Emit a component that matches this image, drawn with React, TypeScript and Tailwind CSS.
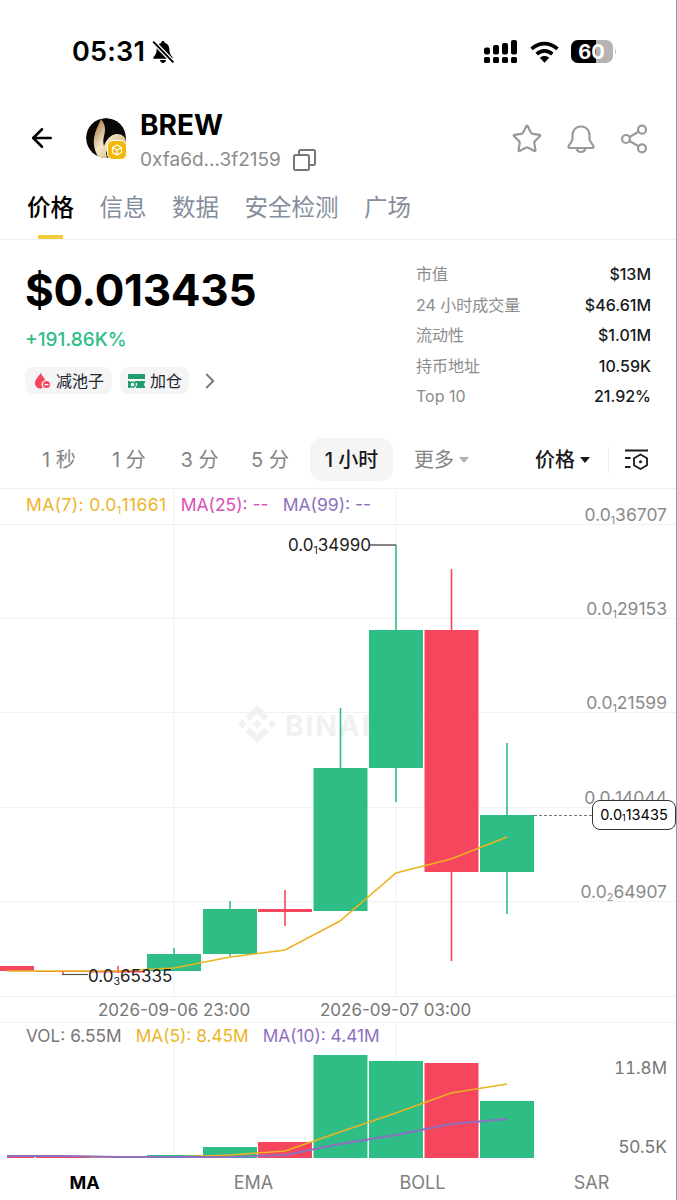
import { ArrowLeft, ChevronRight, Share2, Star } from "lucide-react";

const sans = "font-['Inter','Noto_Sans_CJK_SC',sans-serif]";

const GREEN = "#2ebd85";
const RED = "#f6465d";

const candles = [
  { x: 63, body: [971, 972], wick: [971, 974], up: false, w: 54 },
  { x: 118, body: [971, 972.5], wick: [966, 973], up: false, w: 54 },
  { x: 174, body: [954, 971], wick: [948, 971], up: true, w: 54 },
  { x: 230, body: [909, 954], wick: [901, 956], up: true, w: 54 },
  { x: 285, body: [909, 912], wick: [890, 926], up: false, w: 54 },
  { x: 340.5, body: [768, 911], wick: [708, 911], up: true, w: 54 },
  { x: 396, body: [630, 768], wick: [545, 802], up: true, w: 54 },
  { x: 451.5, body: [630, 872], wick: [569, 961], up: false, w: 54 },
  { x: 507, body: [815, 872], wick: [743, 914], up: true, w: 54 },
];

const volumes = [
  { x: 63, top: 1157, up: false },
  { x: 118, top: 1157.5, up: false },
  { x: 174, top: 1155, up: true },
  { x: 230, top: 1147, up: true },
  { x: 285, top: 1142, up: false },
  { x: 340.5, top: 1055, up: true },
  { x: 396, top: 1061, up: true },
  { x: 451.5, top: 1063, up: false },
  { x: 507, top: 1101, up: true },
];

const priceLabels = [
  { sub: "1", rest: "36707", top: "top-[14px]" },
  { sub: "1", rest: "29153", top: "top-[108px]" },
  { sub: "1", rest: "21599", top: "top-[202px]" },
  { sub: "1", rest: "14044", top: "top-[297px]" },
  { sub: "2", rest: "64907", top: "top-[391px]" },
];

const stats = [
  ["市值", "$13M"],
  ["24 小时成交量", "$46.61M"],
  ["流动性", "$1.01M"],
  ["持币地址", "10.59K"],
  ["Top 10", "21.92%"],
];

function Sub({ sub, rest }: { sub: string; rest: string }) {
  return (
    <>
      0.0
      <span className="text-[0.62em] relative top-[0.3em]">{sub}</span>
      {rest}
    </>
  );
}

function StatusBar() {
  return (
    <div className="h-[101px] flex items-start justify-between pt-[37px] pl-[72px] pr-[60px]">
      <div className="flex items-center gap-[6px]">
        <span className="text-[27px] leading-[30px] font-semibold text-black tracking-[0.2px]">05:31</span>
        <svg width="24" height="24" viewBox="0 0 22 22">
          <path d="M11 1c-.9 0-1.5.6-1.6 1.5C6.800 3.200 5.200 5.500 5.200 8.300c0 3.800-1 5.600-3 7.500v1.500h17.600v-1.500c-2-1.900-3-3.700-3-7.500 0-2.800-1.600-5.100-4.200-5.800C12.500 1.600 11.900 1 11 1zM8.200 18.300c.2 1.500 1.400 2.700 2.800 2.700s2.600-1.200 2.800-2.700z" fill="#000" />
          <path d="M2 1.500 20.500 20.500" stroke="#fff" strokeWidth="4" />
          <path d="M2 1.500 20.500 20.500" stroke="#000" strokeWidth="1.800" />
        </svg>
      </div>
      <div className="flex items-center gap-[12px] pt-[3px]">
        <svg width="34" height="23" viewBox="0 0 34 23" fill="#000">
          <rect x="0" y="17" width="6" height="6" rx="1.500" />
          <rect x="9" y="17" width="6" height="6" rx="1.500" />
          <rect x="18" y="17" width="6" height="6" rx="1.500" />
          <rect x="27" y="17" width="6" height="6" rx="1.500" />
          <rect x="0" y="7.500" width="6" height="7" rx="2" />
          <rect x="9" y="5" width="6" height="9.500" rx="2" />
          <rect x="18" y="3" width="6" height="11.500" rx="2" />
          <rect x="27" y="0" width="6" height="14.500" rx="2" />
        </svg>
        <svg width="29" height="22" viewBox="0 0 28 21">
          <path d="M1.500 7.500C9 .8 19 .8 26.500 7.500" stroke="#000" strokeWidth="3.600" fill="none" />
          <path d="M6.500 12.500C11 8.500 17 8.500 21.500 12.500" stroke="#000" strokeWidth="3.600" fill="none" />
          <path d="M9.500 16 14 20.800 18.500 16C16 13.800 12 13.800 9.500 16z" fill="#000" />
        </svg>
        <div className="flex items-center gap-[2px]">
          <div className="relative w-[42px] h-[23px] rounded-[7px] bg-[#b4b4b4] overflow-hidden">
            <div className="h-full w-[25px] bg-black" />
            <span className="absolute inset-0 flex items-center justify-center pr-[1px] text-[20px] font-bold text-white">60</span>
          </div>
          <div className="w-[1px] h-[5px] bg-[#c4c4c4]" />
        </div>
      </div>
    </div>
  );
}

function Avatar() {
  return (
    <div className="relative w-[40px] h-[40px]">
      <svg width="40" height="40" viewBox="0 0 40 40" className="rounded-full">
        <defs>
          <linearGradient id="gold" x1="0" y1="0" x2="1" y2="1">
            <stop offset="0" stopColor="#9a6b2f" />
            <stop offset="0.45" stopColor="#f5e6c6" />
            <stop offset="1" stopColor="#c9a469" />
          </linearGradient>
        </defs>
        <circle cx="20" cy="20" r="20" fill="#0a0806" />
        <path d="M15 1c4 5 5 10 3 17-1 4-1 7 0 10 2-6 7-12 13-12 5 0 9 3 9 8l-4 8c1-5-1-9-5-9-4 0-8 5-11 12l1 5h-8C9 34 7 27 8 20c1-7 4-12 7-19z" fill="url(#gold)" />
      </svg>
      <div className="absolute left-[21px] top-[22px] w-[20px] h-[20px] rounded-[6px] bg-[#f0b90b] border-[1.500px] border-white flex items-center justify-center">
        <svg width="12" height="12" viewBox="0 0 12 12" fill="none" stroke="#fff" strokeWidth="1.200">
          <path d="M6 1 10.500 3.500V8.500L6 11 1.500 8.500V3.500z" />
          <path d="M1.500 3.500 6 6 10.500 3.500M6 6V11" />
        </svg>
      </div>
    </div>
  );
}

function Header() {
  return (
    <div className="h-[74px] flex items-start pl-[27px] pr-[26px]">
      <div className="mt-[22px] w-[32px]">
        <ArrowLeft size={30} strokeWidth={2} className="text-black" />
      </div>
      <div className="mt-[17px] ml-[27px]">
        <Avatar />
      </div>
      <div className="ml-[14px] flex-1">
        <div className="text-[28px] leading-[34px] mt-[7px] font-bold text-black">BREW</div>
        <div className="flex items-center gap-[12px] mt-[6px]">
          <span className="text-[19px] leading-[24px] text-[#8c8c8c]">0xfa6d...3f2159</span>
          <svg width="23" height="22" viewBox="0 0 23 22" fill="none" stroke="#777" strokeWidth="2">
            <rect x="1" y="6" width="15" height="15" rx="1.500" />
            <path d="M6 6V2.500C6 1.700 6.700 1 7.500 1H20.500C21.300 1 22 1.700 22 2.500V14.500C22 15.300 21.300 16 20.500 16H16" />
          </svg>
        </div>
      </div>
      <div className="flex items-center gap-[22px] mt-[22px] text-[#9a9a9a]">
        <Star size={32} strokeWidth={2.200} absoluteStrokeWidth className="mr-[1px]" />
        <svg width="30" height="30" viewBox="0 0 30 30" fill="none" stroke="currentColor" strokeWidth="2.200">
          <path d="M15 2.500C9.500 2.500 6.500 6.500 6.500 11.500V15C6.500 18 3 20 2.500 22.500 2.300 23.500 3 24 4 24H26C27 24 27.700 23.500 27.500 22.500 27 20 23.500 18 23.500 15V11.500C23.500 6.500 20.500 2.500 15 2.500Z" />
          <path d="M10.500 24C11 26.500 12.800 28 15 28S19 26.500 19.500 24" />
        </svg>
        <Share2 size={32} strokeWidth={2.200} absoluteStrokeWidth />
      </div>
    </div>
  );
}

function Tabs() {
  return (
    <div className="relative h-[65px] border-b border-[#efefef] pl-[27px] flex items-start gap-[25.500px] pt-[17px] text-[23.500px] leading-[32px] text-[#848e9c]">
      <span className="font-medium text-black">价格</span>
      <span>信息</span>
      <span>数据</span>
      <span>安全检测</span>
      <span>广场</span>
      <div className="absolute left-[38px] bottom-0 w-[25px] h-[4px] bg-[#f0cf3d]" />
    </div>
  );
}

function PriceBlock() {
  return (
    <div className="h-[198px] flex justify-between pl-[25px] pr-[25px]">
      <div>
        <div className="text-[44px] leading-[54px] mt-[23px] font-bold text-black tracking-[-0.3px]">$0.013435</div>
        <div className="text-[19px] leading-[24px] mt-[11px] font-medium text-[#2ebd85]">+191.86K%</div>
        <div className="flex items-center gap-[8px] mt-[15px] text-[16px] text-[#202630]">
          <div className="h-[27px] px-[8px] rounded-[8px] bg-[#f5f5f5] flex items-center gap-[5px]">
            <svg width="18" height="18" viewBox="0 0 18 18">
              <path d="M7.500 1C5.500 5 2 7 2 11c0 3.300 2.500 5.500 5.500 5.500 1 0 1.800-.2 2.500-.7-1-.9-1.500-2-1.500-3.300 0-2.200 1.600-4 3.800-4.200C11 5.500 9 3.500 7.500 1z" fill={RED} />
              <circle cx="13.500" cy="12.500" r="3.500" fill={RED} />
              <rect x="11.500" y="12" width="4" height="1.200" fill="#fff" />
            </svg>
            <span>减池子</span>
          </div>
          <div className="h-[27px] px-[7px] rounded-[8px] bg-[#f5f5f5] flex items-center gap-[5px]">
            <svg width="18" height="18" viewBox="0 0 18 18" fill="#1f9d6d">
              <rect x="1" y="2" width="17" height="5" />
              <path d="M8 9H18V11C16.500 11.300 16.500 13.700 18 14V16H9V14H10V11H8z" />
              <path d="M1 9H3V16H1z" />
              <circle cx="5.500" cy="12.500" r="2.600" fill="none" stroke="#1f9d6d" strokeWidth="1.500" />
            </svg>
            <span>加仓</span>
          </div>
          <ChevronRight size={26} strokeWidth={1.700} className="text-[#777]" />
        </div>
      </div>
      <div className="w-[235px] pt-[19px] flex flex-col">
        {stats.map(([label, value]) => (
          <div key={label} className="h-[30.500px] flex items-center justify-between text-[16px]">
            <span className="text-[#8c8c8c]">{label}</span>
            <span className="font-medium text-[#181a20]">{value}</span>
          </div>
        ))}
      </div>
    </div>
  );
}

function Intervals() {
  return (
    <div className="h-[51px] flex items-start border-b border-[#efefef] text-[20px] text-[#848484]">
      <span className="w-[70px] ml-[24px] h-[43px] flex items-center justify-center">1 秒</span>
      <span className="w-[70px] h-[43px] flex items-center justify-center">1 分</span>
      <span className="w-[71px] h-[43px] flex items-center justify-center">3 分</span>
      <span className="w-[70px] h-[43px] flex items-center justify-center">5 分</span>
      <span className="w-[83px] ml-[5px] h-[43px] rounded-[12px] bg-[#f5f5f5] flex items-center justify-center font-medium text-[#181a20]">1 小时</span>
      <span className="ml-[21px] h-[43px] flex items-center gap-[5px]">
        更多
        <svg width="10" height="6" viewBox="0 0 10 6"><path d="M0 0h10L5 6z" fill="#b0b0b0" /></svg>
      </span>
      <span className="ml-[auto] h-[43px] flex items-center gap-[5px] font-medium text-[#181a20]">
        价格
        <svg width="10" height="6" viewBox="0 0 10 6"><path d="M0 0h10L5 6z" fill="#181a20" /></svg>
      </span>
      <span className="ml-[18px] h-[43px] flex items-center">
        <span className="w-px h-[27px] bg-[#f0f0f0]" />
      </span>
      <span className="ml-[15px] mr-[27px] h-[43px] flex items-center">
        <svg width="25" height="22" viewBox="0 0 25 22" fill="none" stroke="#181a20" strokeWidth="1.800">
          <path d="M1 1.500H24M1 9H6.500M1 18H6.500" />
          <path d="M16.500 5.500 23 9.200V16.300L16.500 20 10 16.300V9.200z" />
          <circle cx="16.500" cy="12.800" r="1.500" fill="#181a20" stroke="none" />
        </svg>
      </span>
    </div>
  );
}

function ChartDrawing() {
  const gridY = [524, 618, 712, 807, 901, 996, 1022, 1158];
  return (
    <svg className="absolute inset-0" width="677" height="669" viewBox="0 489 677 669">
      {gridY.map((y) => (
        <line key={y} x1="0" x2="676" y1={y + 0.5} y2={y + 0.5} stroke="#f0f1f2" strokeWidth="1" />
      ))}
      {[174, 396].map((x) => (
        <g key={x}>
          <line x1={x} x2={x} y1="489" y2="996" stroke="#f0f1f2" />
          <line x1={x} x2={x} y1="1022" y2="1158" stroke="#f0f1f2" />
        </g>
      ))}

      {/* watermark */}
      <path
        transform="translate(238 705) scale(1.6)"
        fill="#f1f1f1"
        d="M16.624 13.9202l2.7175 2.7154-7.353 7.353-7.353-7.352 2.7175-2.7164 4.6355 4.6595 4.6356-4.6595zm4.6366-4.6366L24 12l-2.7154 2.7164L18.5682 12l2.6924-2.7164zm-9.272.001l2.7163 2.6914-2.7164 2.7174v-.001L9.2721 12l2.7164-2.7154zm-9.2722-.001L5.4088 12l-2.6914 2.6924L0 12l2.7164-2.7164zM11.9885.0115l7.353 7.329-2.7174 2.7154-4.6356-4.6356-4.6355 4.6595-2.7174-2.7154 7.353-7.353z"
      />
      <text x="285" y="736" fontFamily="Inter, sans-serif" fontWeight="700" fontSize="28" fill="#f1f1f1" letterSpacing="2">BINANCE</text>

      <rect x="0" y="966" width="34" height="5" fill={RED} />
      {candles.map((c) => {
        const color = c.up ? GREEN : RED;
        return (
          <g key={c.x}>
            <line x1={c.x} x2={c.x} y1={c.wick[0]} y2={c.wick[1]} stroke={color} strokeWidth="1.600" />
            <rect x={c.x - c.w / 2} y={c.body[0]} width={c.w} height={c.body[1] - c.body[0]} fill={color} />
          </g>
        );
      })}

      {/* high and low leader lines */}
      <line x1="370" x2="396" y1="545" y2="545" stroke="#333" strokeWidth="1.200" />
      <line x1="62" x2="88" y1="974.500" y2="974.500" stroke="#555" strokeWidth="1.200" />

      {/* MA(7) */}
      <polyline
        points="7,971 63,971 118,971 174,968 230,957 285,950 340,921 396,873 451,859 507,837"
        fill="none"
        stroke="#ecb320"
        strokeWidth="1.600"
      />
      <line x1="534" x2="592" y1="815.500" y2="815.500" stroke="#777" strokeWidth="1.200" strokeDasharray="3 2" />

      {volumes.map((v) => (
        <rect key={v.x} x={v.x - 27} y={v.top} width="54" height={1158 - v.top} fill={v.up ? GREEN : RED} />
      ))}
      <rect x="7" y="1155.500" width="27" height="2.500" fill={RED} />
      <polyline
        points="7,1156 63,1156 118,1157 174,1157 230,1155 285,1151 340,1132 396,1113 451,1093 507,1084"
        fill="none"
        stroke="#ecb320"
        strokeWidth="1.600"
      />
      <polyline
        points="7,1156 63,1156 118,1157 174,1157 230,1157 285,1155 340,1144 396,1135 451,1124 507,1119"
        fill="none"
        stroke="#8e6fc0"
        strokeWidth="1.800"
      />
    </svg>
  );
}

function Chart() {
  return (
    <div className="relative h-[669px] text-[17.500px] text-[#8a8a8a]">
      <ChartDrawing />

      <div className="relative flex items-center h-[32px] pl-[26px] gap-[14px]">
        <span className="text-[#edb52a] tracking-[0.4px]">MA(7): <Sub sub="1" rest="11661" /></span>
        <span className="text-[#d94fb6]">MA(25): --</span>
        <span className="text-[#8e6fc0]">MA(99): --</span>
      </div>

      {priceLabels.map((p) => (
        <span key={p.rest} className={`absolute right-[9px] ${p.top} text-[17.500px] leading-[24px] text-[#8a8a8a]`}>
          <Sub sub={p.sub} rest={p.rest} />
        </span>
      ))}

      <span className="absolute left-[288px] top-[45px] text-[17px] leading-[22px] text-[#222]">
        <Sub sub="1" rest="34990" />
      </span>
      <span className="absolute left-[88px] top-[476px] text-[17px] leading-[22px] text-[#222]">
        <Sub sub="3" rest="65335" />
      </span>

      <span className="absolute left-[592px] top-[311px] w-[84px] h-[30px] rounded-[8px] border border-[#333] bg-white flex items-center justify-center text-[14.500px] text-black">
        <Sub sub="1" rest="13435" />
      </span>

      <span className="absolute left-[98px] top-[510px] text-[17px] leading-[22px] text-[#777]">2026-09-06 23:00</span>
      <span className="absolute left-[320px] top-[510px] text-[17px] leading-[22px] text-[#777]">2026-09-07 03:00</span>

      <div className="absolute left-[26px] top-[534px] flex items-center h-[26px] gap-[14px] text-[17.300px]">
        <span className="text-[#777]">VOL: 6.55M</span>
        <span className="text-[#edb52a]">MA(5): 8.45M</span>
        <span className="text-[#8e6fc0]">MA(10): 4.41M</span>
      </div>

      <span className="absolute right-[9px] top-[568px] text-[17px] leading-[22px] text-[#777] tabular-nums">11.8M</span>
      <span className="absolute right-[9px] top-[647px] text-[17.500px] leading-[22px] text-[#777]">50.5K</span>
    </div>
  );
}

function IndicatorTabs() {
  return (
    <div className="h-[41px] pt-[8px] grid grid-cols-4 items-center text-center text-[18px] text-[#808080]">
      <span className="font-bold text-black">MA</span>
      <span>EMA</span>
      <span>BOLL</span>
      <span>SAR</span>
    </div>
  );
}

export default function App() {
  return (
    <div className={`${sans} w-[677px] h-[1200px] bg-white overflow-hidden border-r border-[#9a9a9a]`}>
      <StatusBar />
      <Header />
      <Tabs />
      <PriceBlock />
      <Intervals />
      <Chart />
      <IndicatorTabs />
    </div>
  );
}
